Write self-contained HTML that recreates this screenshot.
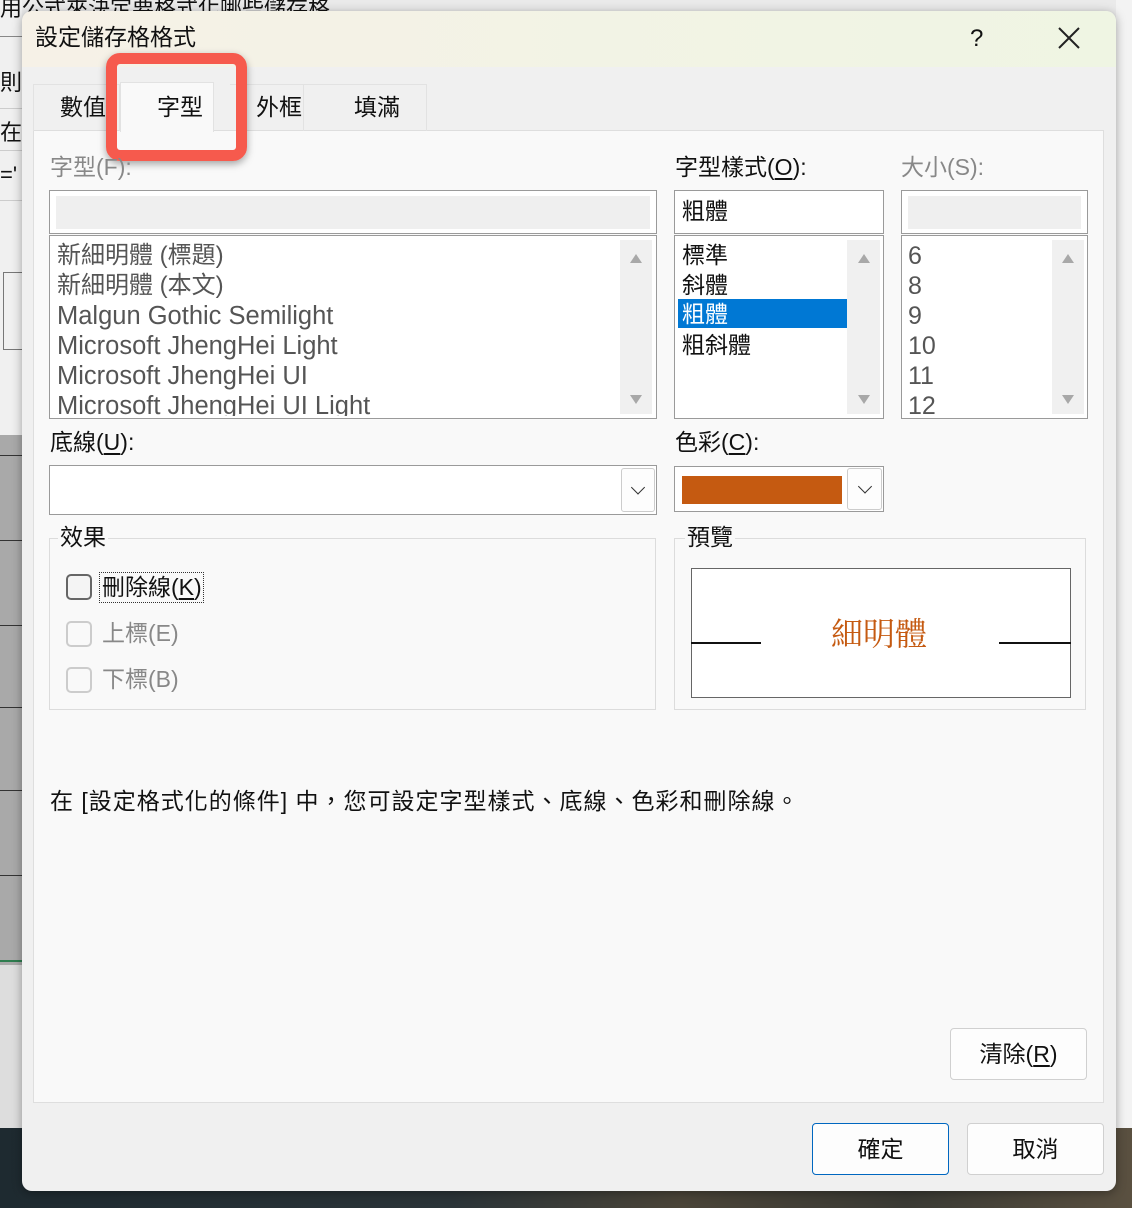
<!DOCTYPE html>
<html><head><meta charset="utf-8">
<style>
*{margin:0;padding:0;box-sizing:border-box}
body{width:1132px;height:1208px;position:relative;overflow:hidden;background:#eaeaea;font-family:"Liberation Sans","Noto Sans CJK TC",sans-serif;font-size:23px;color:#111}
.a{position:absolute}
.t{position:absolute;white-space:nowrap;line-height:30px}
.box{position:absolute;background:#fff;border:1px solid #9a9a9a}
.sb{position:absolute;background:#f0f0f0}
.up,.dn{position:absolute;left:50%;margin-left:-6px;width:0;height:0;border-left:6px solid transparent;border-right:6px solid transparent}
.up{top:14px;border-bottom:9px solid #a8a8a8}
.dn{bottom:10px;border-top:9px solid #a8a8a8}
.dd{position:absolute;background:#fdfdfd;border:1px solid #ccc;border-radius:3px}
.chev{position:absolute;left:50%;top:50%;width:10px;height:10px;border-right:1.5px solid #333;border-bottom:1.5px solid #333;transform:translate(-50%,-75%) rotate(45deg)}
.cb{position:absolute;width:26px;height:26px;border-radius:5px;border:2px solid #666;background:#f4f4f4}
.cb.d{border-color:#ccc;background:#f9f9f9}
.btn{position:absolute;background:#fdfdfd;border:1px solid #d0d0d0;border-radius:4px;text-align:center}
u{text-decoration:underline;text-underline-offset:3px}
</style></head><body>
<div class="a" style="left:0;top:0;width:22px;height:435px;background:#f0f0f0"></div>
<div class="a" style="left:0;top:36px;width:22px;height:1px;background:#888"></div>
<div class="a" style="left:0;top:108px;width:22px;height:1px;background:#ccc"></div>
<div class="a" style="left:0;top:150px;width:22px;height:1px;background:#ccc"></div>
<div class="a" style="left:0;top:200px;width:22px;height:1px;background:#ccc"></div>
<div class="a" style="left:3px;top:272px;width:19px;height:78px;border:1px solid #777;border-right:none"></div>
<div class="t" style="left:0;top:-6px;font-size:22px">用公式來決定要格式化哪些儲存格</div>
<div class="t" style="left:0;top:68px;font-size:22px">則訁</div>
<div class="t" style="left:0;top:118px;font-size:22px">在</div>
<div class="t" style="left:0;top:160px;font-size:22px">='</div>
<div class="a" style="left:0;top:435px;width:22px;height:530px;background:#a9a9a9"></div>
<div class="a" style="left:0;top:455px;width:22px;height:1px;background:#333"></div>
<div class="a" style="left:0;top:540px;width:22px;height:1px;background:#333"></div>
<div class="a" style="left:0;top:625px;width:22px;height:1px;background:#333"></div>
<div class="a" style="left:0;top:707px;width:22px;height:1px;background:#333"></div>
<div class="a" style="left:0;top:790px;width:22px;height:1px;background:#333"></div>
<div class="a" style="left:0;top:875px;width:22px;height:1px;background:#333"></div>
<div class="a" style="left:0;top:960px;width:22px;height:2px;background:#2e7d4f"></div>
<div class="a" style="left:0;top:965px;width:22px;height:163px;background:#ddd"></div>
<div class="a" style="left:1116px;top:0;width:16px;height:1128px;background:#f3f3f3"></div>
<div class="a" style="left:0;top:1128px;width:1132px;height:80px;background:linear-gradient(90deg,#1e2a30,#2b3438 40%,#4a4438 60%,#3a3a34 80%,#5a5040)"></div>
<div class="a" style="left:22px;top:11px;width:1094px;height:1180px;background:#f0f0f0;border-radius:10px;box-shadow:0 2px 10px rgba(0,0,0,.35);overflow:hidden">
  <div class="a" style="left:0;top:0;width:1094px;height:56px;background:linear-gradient(90deg,#f6f1e7,#eff5e3)"></div>
</div>
<div class="t" style="left:35px;top:22px">設定儲存格格式</div>
<div class="t" style="left:970px;top:24px;font-size:24px">?</div>
<svg class="a" style="left:1058px;top:27px" width="22" height="22"><path d="M1 1L21 21M21 1L1 21" stroke="#222" stroke-width="2"/></svg>
<div class="a" style="left:33px;top:130px;width:1071px;height:973px;background:#f9f9f9;border:1px solid #dedede"></div>
<div class="a" style="left:33px;top:84px;width:87px;height:47px;border:1px solid #e2e2e2;border-bottom:none"></div>
<div class="a" style="left:230px;top:84px;width:74px;height:47px;border-right:1px solid #e2e2e2;border-top:1px solid #e2e2e2"></div>
<div class="a" style="left:304px;top:84px;width:123px;height:47px;border-right:1px solid #e2e2e2;border-top:1px solid #e2e2e2"></div>
<div class="a" style="left:120px;top:82px;width:94px;height:50px;background:#f9f9f9;border:1px solid #e2e2e2;border-bottom:none"></div>
<div class="t" style="left:60px;top:92px">數值</div>
<div class="t" style="left:157px;top:92px">字型</div>
<div class="t" style="left:256px;top:92px">外框</div>
<div class="t" style="left:354px;top:92px">填滿</div>
<div class="a" style="left:106px;top:53px;width:141px;height:108px;border:11px solid #f65a4d;border-radius:14px;box-shadow:0 3px 8px rgba(0,0,0,.35)"></div>
<div class="t" style="left:50px;top:152px;color:#888">字型(F):</div>
<div class="t" style="left:675px;top:152px">字型樣式(<u>O</u>):</div>
<div class="t" style="left:901px;top:152px;color:#888">大小(S):</div>
<div class="box" style="left:49px;top:190px;width:608px;height:44px"></div>
<div class="a" style="left:56px;top:196px;width:594px;height:33px;background:#efefef"></div>
<div class="box" style="left:674px;top:190px;width:210px;height:44px"></div>
<div class="t" style="left:682px;top:196px">粗體</div>
<div class="box" style="left:901px;top:190px;width:187px;height:44px"></div>
<div class="a" style="left:908px;top:196px;width:173px;height:33px;background:#efefef"></div>
<div class="box" style="left:49px;top:235px;width:608px;height:184px"><div class="sb" style="left:570px;top:4px;width:32px;height:174px"><div class="up"></div><div class="dn"></div></div></div>
<div class="a" style="left:57px;top:238px;width:560px;height:178px;overflow:hidden;color:#555;font-size:24px;padding-top:3px">
<div class="t" style="position:static">新細明體 (標題)</div>
<div class="t" style="position:static">新細明體 (本文)</div>
<div class="t" style="position:static;font-size:25.5px">Malgun Gothic Semilight</div>
<div class="t" style="position:static;font-size:25.5px">Microsoft JhengHei Light</div>
<div class="t" style="position:static;font-size:25.5px">Microsoft JhengHei UI</div>
<div class="t" style="position:static;font-size:25.5px">Microsoft JhengHei UI Light</div>
</div>
<div class="box" style="left:674px;top:235px;width:210px;height:184px"><div class="sb" style="left:172px;top:4px;width:33px;height:174px"><div class="up"></div><div class="dn"></div></div></div>
<div class="a" style="left:678px;top:299px;width:169px;height:29px;background:#0078d4"></div>
<div class="t" style="left:682px;top:240px">標準</div>
<div class="t" style="left:682px;top:270px">斜體</div>
<div class="t" style="left:682px;top:299px;color:#fff">粗體</div>
<div class="t" style="left:682px;top:330px">粗斜體</div>
<div class="box" style="left:901px;top:235px;width:187px;height:184px"><div class="sb" style="left:150px;top:4px;width:32px;height:174px"><div class="up"></div><div class="dn"></div></div></div>
<div class="a" style="left:908px;top:238px;width:140px;height:178px;overflow:hidden;color:#555;font-size:25px;padding-top:3px">
<div class="t" style="position:static">6</div><div class="t" style="position:static">8</div><div class="t" style="position:static">9</div><div class="t" style="position:static">10</div><div class="t" style="position:static">11</div><div class="t" style="position:static">12</div>
</div>
<div class="t" style="left:50px;top:427px">底線(<u>U</u>):</div>
<div class="box" style="left:49px;top:465px;width:608px;height:50px"></div>
<div class="dd" style="left:621px;top:468px;width:34px;height:44px"><div class="chev"></div></div>
<div class="t" style="left:675px;top:427px">色彩(<u>C</u>):</div>
<div class="box" style="left:674px;top:466px;width:210px;height:46px"></div>
<div class="a" style="left:682px;top:476px;width:160px;height:28px;background:#c55a11"></div>
<div class="dd" style="left:847px;top:468px;width:35px;height:42px"><div class="chev"></div></div>
<div class="a" style="left:49px;top:538px;width:607px;height:172px;border:1px solid #dcdcdc"></div>
<div class="t" style="left:58px;top:522px;background:#f9f9f9;padding:0 2px">效果</div>
<div class="cb" style="left:66px;top:574px"></div>
<div class="a" style="left:99px;top:572px;width:105px;height:31px;border:1px dotted #333"></div>
<div class="t" style="left:102px;top:572px">刪除線(<u>K</u>)</div>
<div class="cb d" style="left:66px;top:621px"></div>
<div class="t" style="left:102px;top:618px;color:#888">上標(E)</div>
<div class="cb d" style="left:66px;top:667px"></div>
<div class="t" style="left:102px;top:664px;color:#888">下標(B)</div>
<div class="a" style="left:674px;top:538px;width:412px;height:172px;border:1px solid #dcdcdc"></div>
<div class="t" style="left:685px;top:522px;background:#f9f9f9;padding:0 2px">預覽</div>
<div class="a" style="left:691px;top:568px;width:380px;height:130px;background:#fff;border:1px solid #666"></div>
<div class="a" style="left:691px;top:642px;width:70px;height:1.5px;background:#111"></div>
<div class="a" style="left:999px;top:642px;width:72px;height:1.5px;background:#111"></div>
<div class="t" style="left:831px;top:614px;font-size:32px;line-height:40px;color:#c55a11;font-family:'Liberation Serif','Noto Serif CJK SC',serif">細明體</div>
<div class="t" style="left:50px;top:786px;letter-spacing:1px">在 [設定格式化的條件] 中，您可設定字型樣式、底線、色彩和刪除線。</div>
<div class="btn" style="left:950px;top:1028px;width:137px;height:52px;line-height:50px">清除(<u>R</u>)</div>
<div class="btn" style="left:812px;top:1123px;width:137px;height:52px;line-height:50px;border:1.5px solid #0067c0">確定</div>
<div class="btn" style="left:967px;top:1123px;width:137px;height:52px;line-height:50px">取消</div>
</body></html>
